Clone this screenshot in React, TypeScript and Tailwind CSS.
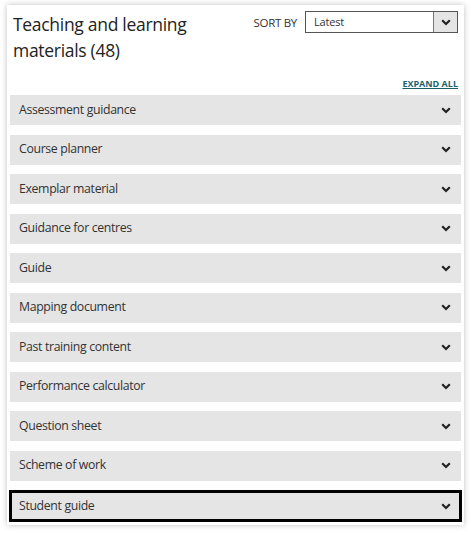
import React from 'react';

const items = [
  'Assessment guidance',
  'Course planner',
  'Exemplar material',
  'Guidance for centres',
  'Guide',
  'Mapping document',
  'Past training content',
  'Performance calculator',
  'Question sheet',
  'Scheme of work',
  'Student guide',
];

function Chevron({ className = '' }: { className?: string }) {
  return (
    <svg width="10" height="7" viewBox="0 0 10 7" className={className}>
      <path d="M1.2 1.2 L5 5 L8.8 1.2" fill="none" stroke="#222" strokeWidth="2.2" />
    </svg>
  );
}

export default function App() {
  return (
    <main className="min-h-[535px] bg-white pt-[5px] pl-[7px] pr-[10px] pb-[11px]" style={{ fontFamily: '"Open Sans", sans-serif' }}>
      <div className="bg-white shadow-[0_0_6px_rgba(0,0,0,0.25)] pl-[3px] pr-[3px] pb-[3px]">
        <div className="flex justify-between pt-[6px]">
          <h1 className="pl-[3px] text-[17.5px] tracking-[-0.3px] leading-[26px] text-[#222] w-[220px]">
            Teaching and learning materials (48)
          </h1>
          <div className="flex items-start gap-2 pr-[3px]">
            <span className="whitespace-nowrap text-[11.5px] tracking-[-0.3px] leading-[16px] text-[#333] mt-[4px]">SORT BY</span>
            <div className="flex w-[153px] h-[22px] border border-[#555] bg-white">
              <span className="flex-1 pl-[8px] text-[11px] tracking-[-0.2px] leading-[20px] text-[#333]">Latest</span>
              <span className="w-[24px] flex items-center justify-center bg-[#e4e4e4] border-l border-[#777]">
                <Chevron />
              </span>
            </div>
          </div>
        </div>
        <div className="flex justify-end pr-[3px] mt-[15px] mb-[5px]">
          <a className="text-[9px] font-bold text-[#1d5f6e] underline leading-[12px]">EXPAND ALL</a>
        </div>
        <div className="flex flex-col gap-[9.5px]">
          {items.map((label, i) => (
            <div
              key={label}
              className={
                i === items.length - 1
                  ? 'flex items-center justify-between h-[32px] bg-[#e5e5e5] border-[3px] border-black pl-[7px] pr-[8px] -mx-[1px]'
                  : 'flex items-center justify-between h-[30px] bg-[#e5e5e5] pl-[9px] pr-[10px]'
              }
            >
              <span className="text-[12.3px] tracking-[-0.35px] text-[#333]">{label}</span>
              <Chevron />
            </div>
          ))}
        </div>
      </div>
    </main>
  );
}
